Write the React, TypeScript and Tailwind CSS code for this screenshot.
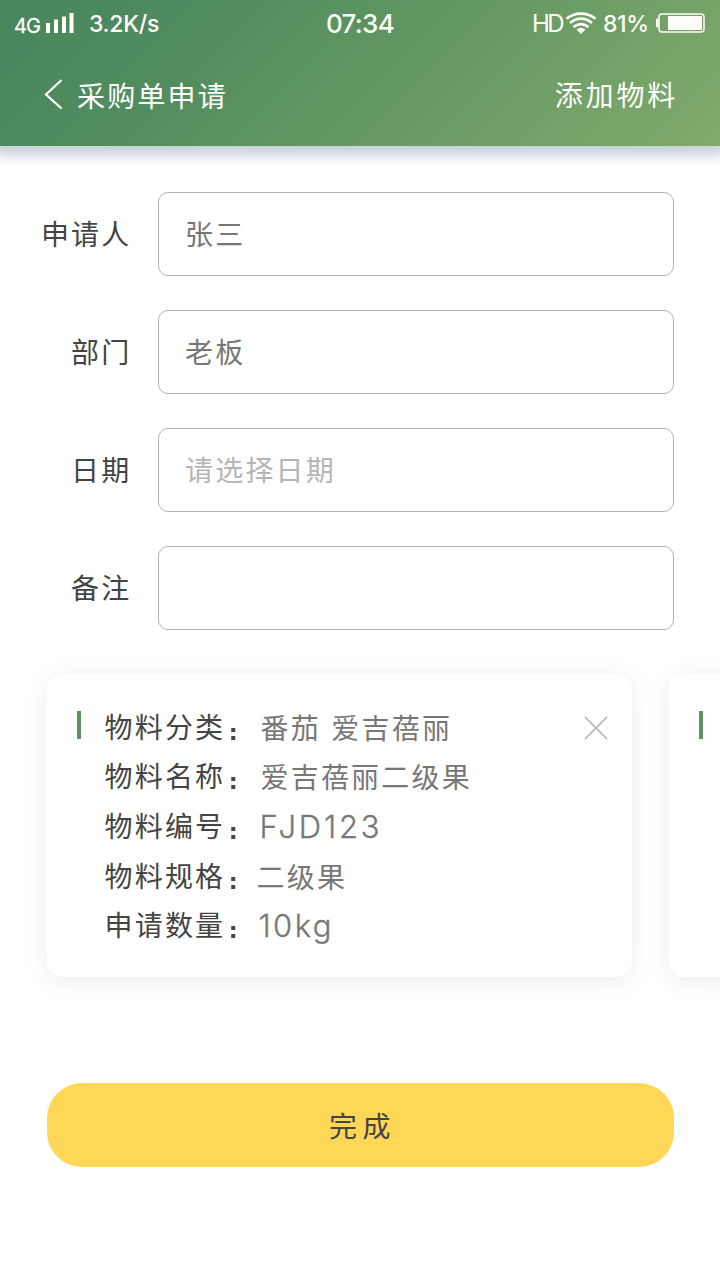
import type { ReactNode } from 'react';

function StatusBar() {
  return (
    <div className="flex h-[48px] items-center pl-[14px] pr-[14px] font-['Inter',sans-serif] text-[#fffef8]">
      <span className="mt-[3px] w-[32px] text-[20px] leading-6 tracking-[-1px] [-webkit-text-stroke:0.3px]">4G</span>
      <svg width="28" height="22" viewBox="0 0 28 22" fill="#fffef8" className="-mt-[2px]">
        <path d="M0 11h4v10H0zM8 7.500h4V21H8zM16 4.500h4V21h-4zM23.500 1h4v20h-4z" />
      </svg>
      <span className="ml-[15px] w-[237px] text-[23px] font-medium leading-7 tracking-[-0.3px]">3.2K/s</span>
      <span className="w-[206px] text-[26px] font-medium leading-8 tracking-[-0.7px]">07:34</span>
      <span className="w-[33px] text-[24px] leading-7 tracking-[-2.5px]">HD</span>
      <svg width="32" height="24" viewBox="0 0 32 24" fill="none" stroke="#fffef8" strokeWidth="2.700" className="-mt-[3px]">
        <path d="M1.500 7.800C9.500 .800 22.500 .800 30.500 7.800M5 12C11.500 6.200 20.500 6.200 27 12M8.500 16.200C13 12 19 12 23.500 16.200" />
        <path d="M11.500 18.500Q16 15.200 20.500 18.500L16 23z" fill="#fffef8" stroke="none" />
      </svg>
      <span className="ml-[6px] w-[52px] text-[23px] font-medium leading-7 tracking-[-0.4px]">81%</span>
      <svg width="50" height="20" viewBox="0 0 50 20" fill="none" className="-mt-[3px]">
        <rect x="4" y="1" width="45" height="18" rx="3" stroke="#fffef8" strokeWidth="1.500" />
        <path d="M3 6H1.500v8H3z" fill="#fffef8" stroke="#fffef8" />
        <rect x="13" y="3" width="34" height="14" fill="#fffef8" />
      </svg>
    </div>
  );
}

function Field({ label, children }: { label: string; children?: ReactNode }) {
  return (
    <div className="flex h-[84px] items-center">
      <span className="w-[131.5px] pb-[2px] text-right text-[#444]">{label}</span>
      <div className="ml-[26.5px] flex h-full w-[516px] items-center rounded-[10px] border border-[#b3b3b3] pb-[2px] pl-[26px] text-[#777]">
        {children}
      </div>
    </div>
  );
}

const details = [
  { label: '物料分类', value: '番茄 爱吉蓓丽', row: 'h-[49px]', style: "ml-[4px] mt-[1px] [word-spacing:2px]" },
  { label: '物料名称', value: '爱吉蓓丽二级果', row: 'h-[50px]', style: 'ml-[4px] mt-[1px]' },
  { label: '物料编号', value: 'FJD123', row: 'h-[50px]', style: "ml-[3px] mt-[2px] font-['Inter',sans-serif] font-light text-[31px] tracking-[2.8px] [-webkit-text-stroke:0.3px]" },
  { label: '物料规格', value: '二级果', row: 'h-[49px]', style: 'ml-0 mt-[1px]' },
  { label: '申请数量', value: '10kg', row: 'h-[49px]', style: "ml-[2px] mt-[2px] font-['Inter',sans-serif] font-light text-[31px] tracking-[2.4px] [-webkit-text-stroke:0.3px]" },
];

function Card({ children }: { children?: ReactNode }) {
  return (
    <div className="flex h-[303px] w-[585px] shrink-0 items-start rounded-[16px] bg-white pl-[30px] pt-[31px] shadow-[0_4px_24px_rgba(60,80,120,0.10)]">
      <span className="mt-[6px] h-[28px] w-[4px] shrink-0 bg-[#5b9462]" />
      {children}
    </div>
  );
}

export default function App() {
  return (
    <div className="h-[1280px] w-[720px] overflow-hidden bg-white font-['Noto_Sans_CJK_SC',sans-serif] text-[28px] leading-[42px] tracking-[2.2px]">
      <header className="h-[146px] bg-[linear-gradient(135deg,#47855d_0%,#548e5f_32%,#82aa6b_100%)] shadow-[0_3px_12px_6px_rgba(80,115,145,0.34)]">
        <div className="tracking-normal"><StatusBar /></div>
        <div className="flex h-[94px] items-center pl-[44px] pr-[42px] text-white">
          <svg width="20" height="32" viewBox="0 0 20 32" fill="none" stroke="white" strokeWidth="2.200" className="-mt-[2px]">
            <path d="M17.500 2L2 16.500L17.500 30.500" />
          </svg>
          <h1 className="ml-[13px]">采购单申请</h1>
          <button className="ml-auto -mt-[2px] tracking-[2.8px]">添加物料</button>
        </div>
      </header>
      <main>
        <div className="flex flex-col gap-[34px] pt-[46px]">
          <Field label="申请人">张三</Field>
          <Field label="部门">老板</Field>
          <Field label="日期"><span className="text-[#b5b5b5]">请选择日期</span></Field>
          <Field label="备注" />
        </div>
        <div className="mt-[44px] flex gap-[37px] pl-[47px]">
          <Card>
            <div className="ml-[23.5px]">
              {details.map((item) => (
                <div key={item.label} className={`flex items-start whitespace-nowrap ${item.row}`}>
                  <span className="flex w-[152px] items-baseline text-[#444]">
                    {item.label}
                    <span className="relative top-[2px] ml-[3.5px] font-['DejaVu_Sans',sans-serif] text-[22px] font-bold leading-none">:</span>
                  </span>
                  <span className={`text-[#777] ${item.style}`}>{item.value}</span>
                </div>
              ))}
            </div>
            <svg width="24" height="24" viewBox="0 0 24 24" stroke="#b3b3b3" strokeWidth="1.700" className="ml-auto mr-[24.5px] mt-[11px]">
              <path d="M1 1L23 23M23 1L1 23" />
            </svg>
          </Card>
          <Card />
        </div>
        <button className="ml-[47px] mt-[106px] flex h-[84px] w-[627px] items-center justify-center rounded-[35px] bg-[#ffd757] pb-[1px] pl-[4px] tracking-[5.5px] text-[#444]">完成</button>
      </main>
    </div>
  );
}
